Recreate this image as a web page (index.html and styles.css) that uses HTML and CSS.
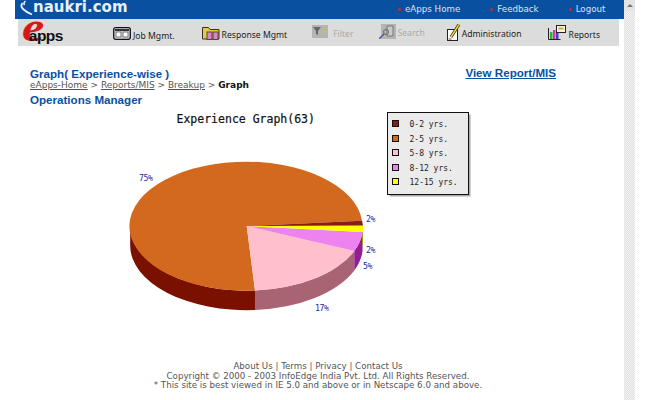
FILE: index.html

```html
<!DOCTYPE html>
<html lang="en">
<head>
  <meta charset="UTF-8" />
  <title>Experience Graph</title>
  <link rel="stylesheet" href="styles.css">
</head>
<body>
  <div class="page">
    <div class="topbar">
      <div class="brand">
        <svg class="swoosh" width="13" height="16" viewBox="0 0 13 16"><path d="M5.500 1 Q3 3 4.500 5" fill="none" stroke="#e8f0f8" stroke-width="1.500"/><path d="M2.500 3 Q0 6 3 9 Q6 12 12 14.500" fill="none" stroke="#e8f0f8" stroke-width="1.800"/></svg>
        <span>naukri.com</span>
      </div>
      <div class="toplinks">
        <a class="toplink link-home"><i></i>eApps Home</a>
        <a class="toplink link-feedback"><i></i>Feedback</a>
        <a class="toplink link-logout"><i></i>Logout</a>
      </div>
    </div>

    <div class="toolbar">
      <div class="logo"><span class="logo-e">e</span><span class="logo-apps">apps</span></div>

      <a class="tool tool-job">
        <svg width="18" height="13" viewBox="0 0 18 13"><rect x="0.700" y="0.700" width="16.600" height="11.600" rx="2" fill="#d8d8e0" stroke="#111" stroke-width="1.300"/><rect x="2" y="2" width="14" height="2" fill="#333"/><rect x="3" y="5" width="5" height="5" fill="#fff" stroke="#444" stroke-width="0.700"/><rect x="10" y="5" width="5" height="5" fill="#fff" stroke="#444" stroke-width="0.700"/></svg>
        <span>Job Mgmt.</span>
      </a>
      <a class="tool tool-response">
        <svg width="18" height="14" viewBox="0 0 18 14"><path d="M0.500 1.500h6l1.500 2h9v9.500h-16.500z" fill="#e8c840" stroke="#333"/><rect x="5" y="6" width="5" height="7.500" fill="#e080d0" stroke="#333" stroke-width="0.800"/><rect x="11" y="6" width="5" height="7.500" fill="#e080d0" stroke="#333" stroke-width="0.800"/></svg>
        <span>Response Mgmt</span>
      </a>
      <a class="tool tool-filter off">
        <svg width="16" height="13" viewBox="0 0 16 13"><rect width="16" height="13" fill="#b4b4b4"/><path d="M1 2h8l-3 4v4l-2-1v-3z" fill="#666"/><path d="M13 3l-3 4h2l-2 4 4-5h-2l2-3z" fill="#c8c838"/></svg>
        <span>Filter</span>
      </a>
      <a class="tool tool-search off">
        <svg width="17" height="15" viewBox="0 0 17 15"><rect x="2" y="0" width="15" height="15" fill="#b4b4b4"/><path d="M8 2h6v10h-6z" fill="#c8c8c8" stroke="#777"/><circle cx="7" cy="8" r="2.500" fill="none" stroke="#666"/><path d="M5 10l-5 5" stroke="#5050a0" stroke-width="1.500"/></svg>
        <span>Search</span>
      </a>
      <a class="tool tool-admin">
        <svg width="14" height="17" viewBox="0 0 14 17"><rect x="0.500" y="5.500" width="10" height="11" fill="#fff" stroke="#222"/><path d="M12 0.500 L4 13" stroke="#222" stroke-width="3"/><path d="M12 0.500 L4 13" stroke="#f0e020" stroke-width="1.500"/><path d="M1.500 15h3" stroke="#c03030"/></svg>
        <span>Administration</span>
      </a>
      <a class="tool tool-reports">
        <svg width="18" height="15" viewBox="0 0 18 15"><path d="M0.500 3v11.500h12" fill="none" stroke="#222"/><rect x="2" y="7" width="2.500" height="7" fill="#30b030"/><rect x="5" y="5" width="2.500" height="9" fill="#e030c0"/><rect x="8" y="8" width="2.500" height="6" fill="#4040c0"/><rect x="8.500" y="0.500" width="9" height="7" fill="#f4f4e0" stroke="#222"/><rect x="10.500" y="2.500" width="5" height="2" fill="#d0b030"/></svg>
        <span>Reports</span>
      </a>
    </div>

    <div class="heading">
      <div>
        <h1>Graph( Experience-wise )</h1>
        <p class="crumbs"><a>eApps-Home</a> &gt; <a>Reports/MIS</a> &gt; <a>Breakup</a> &gt; <b>Graph</b></p>
        <h2>Operations Manager</h2>
      </div>
      <a class="report-link">View Report/MIS</a>
    </div>

    <svg class="chart" width="360" height="215" viewBox="120 105 360 215">
      <text class="chart-title" x="176.500" y="122">Experience Graph(63)</text>

      <path d="M130.200 225.200 A116.500 64.500 0 0 0 255 289.500 v19.500 A116.500 64.500 0 0 1 130.200 244.700 z" fill="#7a1000"/>
      <path d="M255 289.500 A116.500 64.500 0 0 0 354.300 250 v19.500 A116.500 64.500 0 0 1 255 309 z" fill="#a86472"/>
      <path d="M354.300 250 A116.500 64.500 0 0 0 362.500 231 v19.500 A116.500 64.500 0 0 1 354.300 269.500 z" fill="#921e92"/>
      <rect x="362" y="231" width="1" height="13" fill="#a09a10"/>

      <path d="M246.700 225 L362 219.700 A116.500 64.500 0 1 0 255 289.500 z" fill="#d2691e"/>
      <path d="M246.700 225 L255 289.500 A116.500 64.500 0 0 0 354.300 250 z" fill="#ffc0cb"/>
      <path d="M246.700 225 L354.300 250 A116.500 64.500 0 0 0 362.800 231 z" fill="#ee82ee"/>
      <path d="M246.700 225 L362.800 231 L363 224.500 z" fill="#ffff00"/>
      <path d="M246.700 225 L363 224.500 L362 219.700 z" fill="#8b1a1a"/>

      <text class="pct" x="139" y="180">75%</text>
      <text class="pct" x="366" y="221">2%</text>
      <text class="pct" x="366" y="252">2%</text>
      <text class="pct" x="363" y="268">5%</text>
      <text class="pct" x="315" y="310">17%</text>

      <rect x="389.500" y="113.500" width="81" height="82" fill="#aaa"/>
      <rect x="387.500" y="111.500" width="81" height="82" fill="#ebebeb" stroke="#111"/>
      <rect x="392.500" y="119.500" width="6" height="6" fill="#8b1a1a" stroke="#111"/>
      <rect x="392.500" y="134.500" width="6" height="6" fill="#d2691e" stroke="#111"/>
      <rect x="392.500" y="148.500" width="6" height="6" fill="#ffc0cb" stroke="#111"/>
      <rect x="392.500" y="163.500" width="6" height="6" fill="#ee82ee" stroke="#111"/>
      <rect x="392.500" y="177.500" width="6" height="6" fill="#ffff00" stroke="#111"/>
      <text class="legend-text" x="409.500" y="126">0-2 yrs.</text>
      <text class="legend-text" x="409.500" y="141">2-5 yrs.</text>
      <text class="legend-text" x="409.500" y="155">5-8 yrs.</text>
      <text class="legend-text" x="409.500" y="170">8-12 yrs.</text>
      <text class="legend-text" x="409.500" y="184">12-15 yrs.</text>
    </svg>

    <div class="footer">
      <div>About Us | Terms | Privacy | Contact Us</div>
      <div>Copyright &copy; 2000 - 2003 InfoEdge India Pvt. Ltd. All Rights Reserved.</div>
      <div>* This site is best viewed in IE 5.0 and above or in Netscape 6.0 and above.</div>
    </div>
  </div>

  <div class="scrollbar"><div class="scroll-btn"></div></div>
</body>
</html>
```

FILE: styles.css

```css
html, body {
  margin: 0;
  height: 400px;
  overflow: hidden;
  background: #fff;
}
body {
  display: flex;
  font-family: "DejaVu Sans", sans-serif;
}
a {
  cursor: pointer;
}

.page {
  width: 609px;
  margin-left: 15px;
}

.topbar {
  height: 19px;
  background: #0a50a0;
  display: flex;
  align-items: flex-start;
}
.brand {
  display: flex;
  width: 200px;
  padding-left: 5px;
  color: #e8f0f8;
  font-size: 15px;
  font-weight: bold;
  line-height: 15px;
}
.toplinks {
  display: flex;
  margin-left: 178px;
  font-size: 8.700px;
  line-height: 18px;
  color: #d8e6f4;
}
.toplink {
  display: flex;
  align-items: center;
}
.toplink i {
  width: 3px;
  height: 3px;
  margin-right: 4px;
  background: #e02020;
  border-radius: 50%;
}
.link-feedback,
.link-logout {
  margin-left: 30px;
}

.toolbar {
  height: 27px;
  margin-left: 3px;
  margin-right: 5px;
  background: #dcdcdc;
  display: flex;
  align-items: center;
  font-family: "Noto Sans", sans-serif;
  font-size: 8.600px;
  color: #222;
  white-space: nowrap;
}
.logo {
  width: 91px;
  height: 26px;
  margin-bottom: 6px;
  padding-left: 4px;
  display: flex;
  align-items: baseline;
}
.logo-e {
  font-family: "Liberation Serif", serif;
  font-style: italic;
  font-weight: bold;
  font-size: 40px;
  line-height: 22px;
  color: #d81818;
  transform: scaleX(1.25);
  transform-origin: left;
}
.logo-apps {
  margin-left: -11px;
  font-family: "Liberation Sans", sans-serif;
  font-size: 15.500px;
  font-weight: bold;
  line-height: 15px;
  letter-spacing: -0.500px;
  color: #111;
  position: relative;
}
.tool {
  display: flex;
  align-items: center;
  gap: 2px;
}
.tool.off {
  color: #aaa;
}
.tool-job span {
  padding-top: 6px;
}
.tool-job svg {
  margin-top: 1px;
}
.tool-response {
  margin-left: 27px;
}
.tool-response span {
  padding-top: 5px;
}
.tool-filter {
  margin-left: 25px;
  gap: 5px;
}
.tool-filter span {
  padding-top: 3px;
}
.tool-filter svg,
.tool-search svg {
  margin-bottom: 2px;
}
.tool-search {
  margin-left: 25px;
}
.tool-search span {
  padding-top: 1px;
}
.tool-admin {
  margin-left: 22px;
  gap: 1px;
}
.tool-admin span {
  padding-top: 3px;
}
.tool-reports {
  margin-left: 26px;
  gap: 3px;
}
.tool-reports span {
  padding-top: 5px;
}

.heading {
  display: flex;
  justify-content: space-between;
  padding: 21px 68px 0 15px;
  height: 39px;
}
.heading h1,
.heading h2 {
  margin: 0;
  font-family: "Liberation Sans", sans-serif;
  font-size: 11.600px;
  line-height: 13px;
  color: #0a50a0;
}
.heading h2 {
  margin-top: 2px;
}
.crumbs {
  margin: 0;
  font-size: 9px;
  line-height: 11px;
  color: #555;
}
.crumbs a {
  text-decoration: underline;
}
.crumbs b {
  color: #111;
}
.report-link {
  font-family: "Liberation Sans", sans-serif;
  font-size: 11.600px;
  font-weight: bold;
  line-height: 14px;
  margin-top: -1px;
  color: #0a50a0;
  text-decoration: underline;
}

.chart {
  display: block;
  margin-left: 105px;
}
.chart-title {
  font-family: "DejaVu Sans Mono", monospace;
  font-size: 11.500px;
  fill: #111;
  stroke: #111;
  stroke-width: 0.200px;
}
.pct {
  font-family: "DejaVu Sans Mono", monospace;
  font-size: 8.200px;
  letter-spacing: -0.400px;
  fill: #1a2aa8;
}
.legend-text {
  font-family: "DejaVu Sans Mono", monospace;
  font-size: 8px;
  fill: #222;
}

.footer {
  margin-top: 41px;
  width: 606px;
  text-align: center;
  font-size: 8.700px;
  line-height: 9.500px;
  color: #555;
}

.scrollbar {
  width: 11px;
  height: 400px;
  background: repeating-conic-gradient(#e0e0e0 0% 25%, #f4f4f4 0% 50%) 0 0 / 2px 2px;
}
.scroll-btn {
  height: 11px;
  background: #e4e4e4;
  display: flex;
  align-items: center;
  justify-content: center;
}
.scroll-btn::before {
  content: "";
  border-left: 3px solid transparent;
  border-right: 3px solid transparent;
  border-bottom: 3px solid #777;
}
```
